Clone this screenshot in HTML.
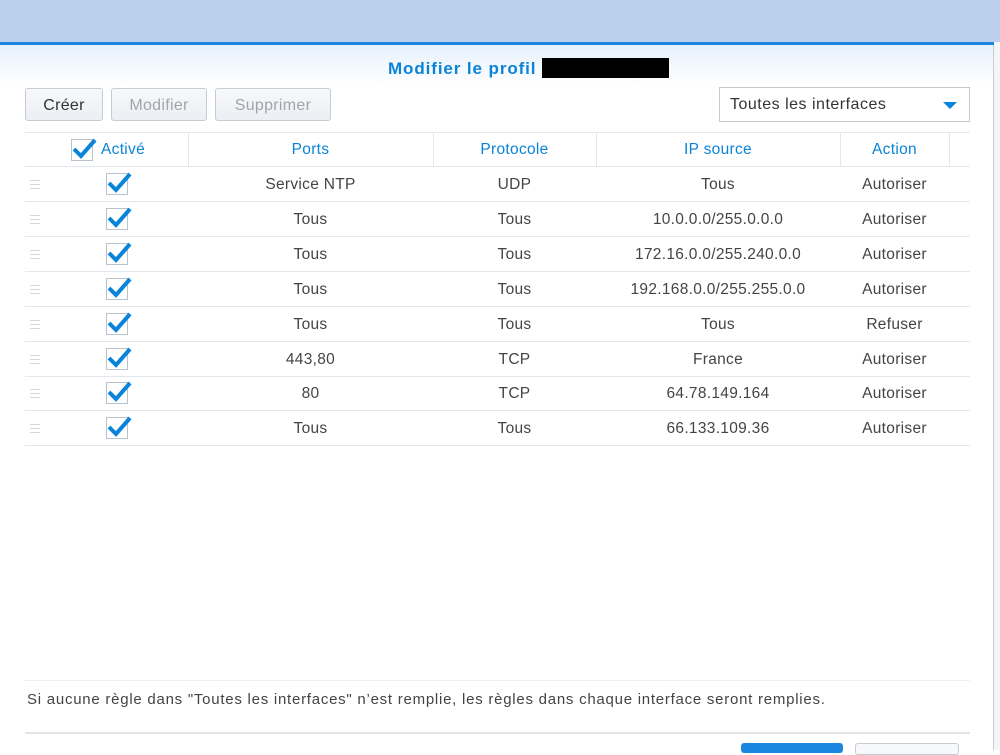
<!DOCTYPE html>
<html><head><meta charset="utf-8"><style>
body{margin:0;width:1000px;height:750px;overflow:hidden;background:#fff;font-family:"Liberation Sans",sans-serif;position:relative}
.top{position:absolute;left:0;top:0;width:1000px;height:42px;background:#bad0ec}
.bl{position:absolute;left:0;top:42px;width:994px;height:3px;background:#1a86e0}
.dlg{position:absolute;left:0;top:45px;width:993px;height:705px;background:linear-gradient(#e6f1fb,#fff 40px);border-right:1px solid #c9cdd2}
.side{position:absolute;left:994px;top:42px;width:6px;height:708px;background:#f4f5f6}
.title{position:absolute;top:58px;left:388px;color:#0a84d9;font-weight:bold;font-size:17px;letter-spacing:0.9px;white-space:nowrap}
.title span{display:inline-block;width:127px;height:20px;background:#000;vertical-align:-4px;margin-left:6px}
.btn{position:absolute;top:88px;height:33px;border:1px solid #c6ccd3;border-radius:3px;background:linear-gradient(#f7f8fa,#eceff3);font-size:16px;line-height:33px;text-align:center;box-sizing:border-box;color:#a0a6ad;letter-spacing:0.3px}
.sel{position:absolute;left:719px;top:87px;width:251px;height:35px;border:1px solid #c3c9cf;box-sizing:border-box;font-size:16px;letter-spacing:0.5px;color:#333;line-height:33px;padding-left:10px;background:#fff}
.sel:after{content:"";position:absolute;right:12px;top:14px;border-left:7px solid transparent;border-right:7px solid transparent;border-top:7px solid #0a84d9}
.hline{position:absolute;left:25px;width:945px;height:1px;background:#e3e8ef}
.vl{position:absolute;top:132px;height:34px;width:1px;background:#e3e8ef}
.th{position:absolute;top:133px;height:34px;line-height:34px;text-align:center;color:#0a84d9;font-size:15.5px;letter-spacing:0.3px}
.td{position:absolute;height:35px;line-height:37px;text-align:center;color:#444;font-size:15.5px;letter-spacing:0.3px}
.cb{position:absolute;width:20px;height:20px;border:1px solid #b9c3ce;background:#fff}
.cb svg{position:absolute;left:-1px;top:-5px}
.drag{position:absolute;left:30px;width:10px;height:7px;border-top:1px solid #d5d9de;border-bottom:1px solid #d5d9de}
.drag:after{content:"";position:absolute;left:0;top:3px;width:10px;height:1px;background:#d5d9de}
.note{position:absolute;left:27px;top:691px;font-size:15px;letter-spacing:0.75px;color:#444;white-space:nowrap}
</style></head><body>
<div class="top"></div><div class="bl"></div><div class="dlg"></div><div class="side"></div>
<div class="title">Modifier le profil<span></span></div>
<div class="btn" style="left:25px;width:78px;color:#333">Créer</div>
<div class="btn" style="left:111px;width:96px">Modifier</div>
<div class="btn" style="left:215px;width:116px">Supprimer</div>
<div class="sel">Toutes les interfaces</div>
<div class="hline" style="top:132px"></div>
<div class="hline" style="top:166px"></div>
<div class="vl" style="left:188px"></div><div class="vl" style="left:433px"></div><div class="vl" style="left:596px"></div><div class="vl" style="left:840px"></div><div class="vl" style="left:949px"></div>
<div class="cb" style="left:71px;top:139px;"><svg width="26" height="26" viewBox="0 0 26 26"><path d="M3 14 L10 21 L24 5" fill="none" stroke="#0a84d9" stroke-width="4"/></svg></div>
<div class="th" style="left:101px;width:56px;text-align:left">Activé</div>
<div class="th" style="left:188px;width:245px">Ports</div>
<div class="th" style="left:433px;width:163px">Protocole</div>
<div class="th" style="left:596px;width:244px">IP source</div>
<div class="th" style="left:840px;width:109px">Action</div>
<div id="rows"></div>
<div class="hline" style="top:680px;left:25px;width:945px;background:#eceff3"></div>
<div class="note">Si aucune règle dans "Toutes les interfaces" n’est remplie, les règles dans chaque interface seront remplies.</div>
<div style="position:absolute;left:25px;top:732px;width:945px;height:2px;background:#e2e4e7"></div>
<div style="position:absolute;left:741px;top:743px;width:102px;height:10px;background:#1a86e0;border-radius:3px"></div>
<div style="position:absolute;left:855px;top:743px;width:102px;height:10px;border:1px solid #c6ccd3;border-radius:3px;background:#f7f8fa"></div>
<script>
var d=[["Service NTP","UDP","Tous","Autoriser"],["Tous","Tous","10.0.0.0/255.0.0.0","Autoriser"],["Tous","Tous","172.16.0.0/255.240.0.0","Autoriser"],["Tous","Tous","192.168.0.0/255.255.0.0","Autoriser"],["Tous","Tous","Tous","Refuser"],["443,80","TCP","France","Autoriser"],["80","TCP","64.78.149.164","Autoriser"],["Tous","Tous","66.133.109.36","Autoriser"]];
var h="";d.forEach(function(r,i){var y=166+i*34.9;
h+='<div class="drag" style="top:'+(y+14)+'px"></div>';
h+='<div class="cb" style="left:106px;top:'+(y+7)+'px"><svg width="26" height="26" viewBox="0 0 26 26"><path d="M3 14 L10 21 L24 5" fill="none" stroke="#0a84d9" stroke-width="4"/></svg></div>';
h+='<div class="td" style="top:'+y+'px;left:188px;width:245px">'+r[0]+'</div>';
h+='<div class="td" style="top:'+y+'px;left:433px;width:163px">'+r[1]+'</div>';
h+='<div class="td" style="top:'+y+'px;left:596px;width:244px">'+r[2]+'</div>';
h+='<div class="td" style="top:'+y+'px;left:840px;width:109px">'+r[3]+'</div>';
h+='<div class="hline" style="top:'+(y+35)+'px"></div>';});
document.getElementById("rows").innerHTML=h;
</script>
</body></html>
